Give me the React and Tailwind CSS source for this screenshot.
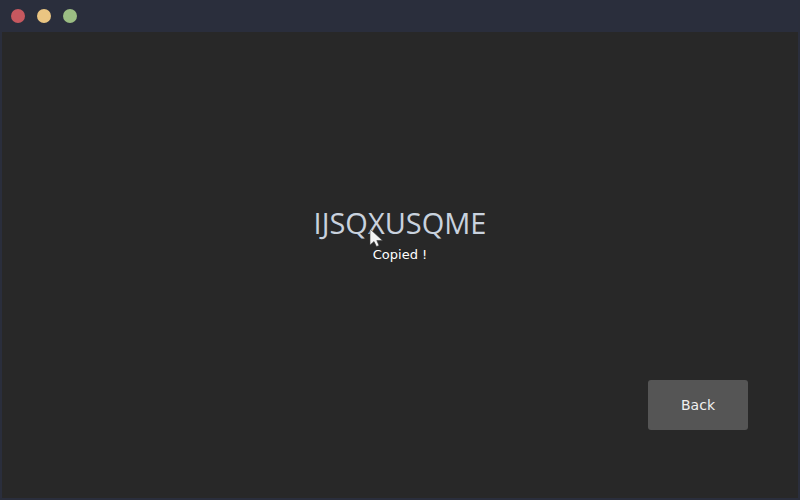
export default function App() {
  return (
    <div className="w-[800px] h-[500px] bg-[#2a2e3c] flex flex-col overflow-hidden" style={{ fontFamily: '"DejaVu Sans", sans-serif' }}>
      <div className="h-[32px] flex items-center gap-[12px] pl-[11px] shrink-0">
        <div className="w-[14px] h-[14px] rounded-full bg-[#c6585f]" />
        <div className="w-[14px] h-[14px] rounded-full bg-[#eac582]" />
        <div className="w-[14px] h-[14px] rounded-full bg-[#9bbd83]" />
      </div>
      <div className="flex-1 mx-[2px] mb-[2px] bg-[#282828] flex flex-col relative">
        <div className="flex flex-col items-center pt-[172px]">
          <div className="relative text-[29px] leading-[38px] text-[#c9d2de]" style={{ fontFamily: '"Open Sans", sans-serif' }}>
            IJSQXUSQME
            <svg className="absolute left-[55px] top-[24px]" width="18" height="20" viewBox="0 0 18 20">
              <path d="M1 1 L1 17 L5 13.5 L7.5 18.5 L10 17.5 L7.8 12.5 L13.5 12.5 Z" fill="#f4f4f4" stroke="#3a3a3a" strokeWidth="0.6" strokeLinejoin="round" />
            </svg>
          </div>
          <div className="text-[13px] leading-[18px] text-white mt-[4px]">Copied !</div>
        </div>
        <div className="flex-1" />
        <div className="flex justify-end pr-[50px] pb-[68px]">
          <button className="w-[100px] h-[50px] bg-[#555555] rounded-[3px] text-[14px] text-[#f0f0f0]">Back</button>
        </div>
      </div>
    </div>
  );
}
